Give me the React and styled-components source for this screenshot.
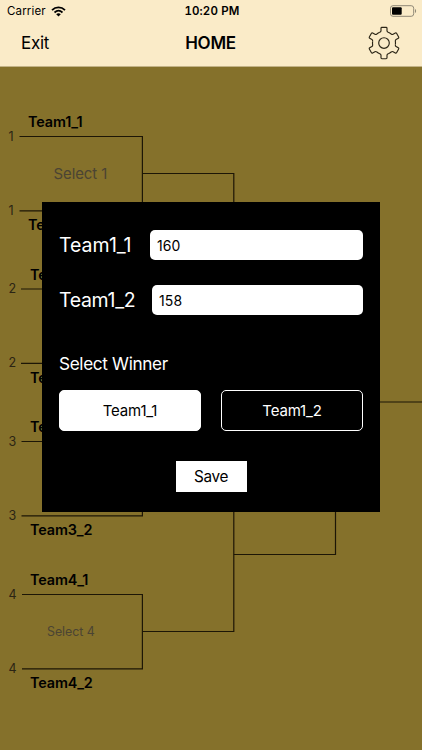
import React, { useState } from "react"
import styled, { createGlobalStyle } from "styled-components"

const GlobalStyle = createGlobalStyle`
  * {
    box-sizing: border-box;
  }

  body {
    margin: 0;
    font-family: "Inter", "Liberation Sans", sans-serif;
    overflow: hidden;
  }
`

const Screen = styled.div`
  width: 422px;
  height: 750px;
  display: flex;
  flex-direction: column;
  background: #85712b;
  color: #000;
  overflow: hidden;
`

const Header = styled.header`
  height: 67px;
  flex: none;
  background: #faebc8;
  border-bottom: 1px solid #c3b386;
`

const StatusBar = styled.div`
  height: 22px;
  display: grid;
  grid-template-columns: 1fr auto 1fr;
  align-items: center;
  padding: 0 5px 0 7px;
  font-size: 11.5px;
`

const Carrier = styled.div`
  display: flex;
  align-items: center;
  gap: 5px;
  letter-spacing: 0.16px;
`

const Clock = styled.div`
  font-weight: 600;
  font-variant-numeric: tabular-nums;
  letter-spacing: 0.15px;
`

const BatteryHolder = styled.div`
  display: flex;
  justify-content: flex-end;
`

const NavBar = styled.nav`
  height: 42px;
  display: grid;
  grid-template-columns: 1fr auto 1fr;
  align-items: center;
  padding: 0 22px 0 21px;
`

const ExitButton = styled.button`
  border: none;
  background: none;
  padding: 0;
  font: inherit;
  font-size: 17px;
  letter-spacing: -0.3px;
  color: #000;
  justify-self: start;
`

const Title = styled.h1`
  margin: 0;
  font-size: 17px;
  font-weight: 600;
  letter-spacing: -0.3px;
`

const SettingsButton = styled.button`
  display: flex;
  border: none;
  background: none;
  padding: 0;
  justify-self: end;
`

const Main = styled.main`
  position: relative;
  flex: 1;
`

const BracketLines = styled.svg`
  display: block;
`

const BracketLabel = styled.span`
  position: absolute;
  left: ${(props) => props.$x}px;
  top: ${(props) => props.$y}px;
  transform: translateY(-50%);
  line-height: 1;
  white-space: nowrap;
`

const TeamName = styled(BracketLabel)`
  font-size: 14.4px;
  font-weight: 600;
  letter-spacing: -0.12px;
`

const Seed = styled(BracketLabel)`
  font-size: 12.5px;
  color: #2b2414;
`

const MatchHint = styled(BracketLabel)`
  font-size: ${(props) => props.$size}px;
  letter-spacing: -0.05px;
  color: #4b4433;
`

const Modal = styled.form`
  position: absolute;
  left: 42px;
  top: 135px;
  width: 338px;
  height: 310px;
  padding: 28px 17px 0;
  background: #000;
  color: #fff;
`

const ScoreRow = styled.div`
  display: flex;
  align-items: center;
  height: 30px;
  margin-bottom: 25px;
`

const ScoreLabel = styled.label`
  width: ${(props) => props.$width}px;
  font-size: 19.5px;
  letter-spacing: ${(props) => props.$spacing}px;
`

const ScoreInput = styled.input`
  flex: 1;
  min-width: 0;
  height: 30px;
  border: none;
  border-radius: 5px;
  padding: 0 7px;
  background: #fff;
  color: #000;
  font: inherit;
  font-size: 14px;
  letter-spacing: 0.1px;
  outline: none;
`

const WinnerHeading = styled.h2`
  margin: 38px 0 15px;
  font-size: 17.2px;
  font-weight: 400;
  line-height: 22px;
  letter-spacing: -0.35px;
`

const WinnerRow = styled.div`
  display: grid;
  grid-template-columns: 1fr 1fr;
  gap: 20px;
`

const WinnerButton = styled.button`
  height: 41px;
  border: 1px solid #fff;
  border-radius: 5px;
  padding: 0;
  background: ${(props) => (props.$selected ? "#fff" : "#000")};
  color: ${(props) => (props.$selected ? "#000" : "#fff")};
  font: inherit;
  font-size: 15px;
  letter-spacing: -0.17px;
`

const SaveButton = styled.button`
  display: block;
  width: 71px;
  height: 31px;
  margin: 30px auto 0;
  border: none;
  padding: 0;
  background: #fff;
  color: #000;
  font: inherit;
  font-size: 15.3px;
  letter-spacing: -0.3px;
`

// y is the top line of each first round match, x the left edge of its lines
const matches = [
  { id: 1, x: 19.5, y: 69.5, nameX: 28 },
  { id: 2, x: 21, y: 222, nameX: 30 },
  { id: 3, x: 21.5, y: 374.5, nameX: 30 },
  { id: 4, x: 22, y: 527.5, nameX: 30 },
]

const hints = [
  { id: 1, x: 53.5, y: 106.5, size: 14.9 },
  { id: 4, x: 47, y: 565, size: 12.4 },
]

const teams = [
  { name: "Team1_1", score: "160", width: 91, spacing: 0 },
  { name: "Team1_2", score: "158", width: 93, spacing: -0.33 },
]

const gearTeeth = [0, 60, 120, 180, 240, 300]

function WifiIcon() {
  return (
    <svg width="15" height="11" viewBox="0 0 15 11" fill="none" stroke="#000">
      <path d="M1 4.1C4.7.5 10.3.5 14 4.1" strokeWidth="1.8" />
      <path d="M3.5 6.5c2.4-2.2 5.6-2.2 8 0" strokeWidth="1.7" />
      <path d="M7.5 10.4 5.2 8.2c1.4-1.2 3.2-1.2 4.6 0z" fill="#000" stroke="none" />
    </svg>
  )
}

function BatteryIcon() {
  return (
    <svg width="27" height="12" viewBox="0 0 27 12">
      <rect x="0.5" y="0.7" width="23.2" height="10.6" rx="2.5" fill="none" stroke="#8f8876" />
      <rect x="2" y="2.3" width="9.7" height="7.4" rx="1" fill="#000" />
      <path d="M25 4v4c1.5-.5 1.5-3.5 0-4z" fill="#8f8876" />
    </svg>
  )
}

function GearIcon() {
  return (
    <svg width="32" height="34" viewBox="-16 -17 32 34" fill="none" stroke="#2b2516" strokeWidth="1.15">
      <circle r="5.3" />
      {gearTeeth.map((angle) => (
        <path
          key={angle}
          transform={`rotate(${angle})`}
          d="M-4.2-10.7Q-3-11.2-3-12.2V-14.8Q-3-15.7-2.1-15.7H2.1Q3-15.7 3-14.8V-12.2Q3-11.2 4.2-10.7Q5.8-10.1 7.17-8.99"
        />
      ))}
    </svg>
  )
}

function Bracket() {
  return (
    <>
      <BracketLines width="422" height="683" fill="none" stroke="#1d1606" strokeWidth="1.2">
        {matches.map((match) => (
          <path key={match.id} d={`M${match.x} ${match.y}H142.4v74.3H${match.x}`} />
        ))}
        <path d="M142.4 106.5H233.8V259.5H142.4" />
        <path d="M142.4 411.5H233.8V564.5H142.4" />
        <path d="M233.8 183H335.5V487.5H233.8" />
        <path d="M335.5 335H422" />
      </BracketLines>
      {matches.map((match) => (
        <React.Fragment key={match.id}>
          <TeamName $x={match.nameX} $y={match.y - 14.5}>{`Team${match.id}_1`}</TeamName>
          <Seed $x={8.5} $y={match.y}>{match.id}</Seed>
          <Seed $x={8.5} $y={match.y + 74.3}>{match.id}</Seed>
          <TeamName $x={match.nameX} $y={match.y + 88.5}>{`Team${match.id}_2`}</TeamName>
        </React.Fragment>
      ))}
      {hints.map((hint) => (
        <MatchHint key={hint.id} $x={hint.x} $y={hint.y} $size={hint.size}>
          Select {hint.id}
        </MatchHint>
      ))}
    </>
  )
}

function ScoreModal() {
  const [scores, setScores] = useState(teams.map((team) => team.score))
  const [winner, setWinner] = useState("Team1_1")

  const updateScore = (index, value) => {
    setScores(scores.map((score, i) => (i === index ? value : score)))
  }

  return (
    <Modal onSubmit={(e) => e.preventDefault()}>
      {teams.map((team, index) => (
        <ScoreRow key={team.name}>
          <ScoreLabel htmlFor={team.name} $width={team.width} $spacing={team.spacing}>
            {team.name}
          </ScoreLabel>
          <ScoreInput
            id={team.name}
            type="text"
            value={scores[index]}
            onChange={(e) => updateScore(index, e.target.value)}
          />
        </ScoreRow>
      ))}
      <WinnerHeading>Select Winner</WinnerHeading>
      <WinnerRow>
        {teams.map((team) => (
          <WinnerButton
            key={team.name}
            type="button"
            $selected={winner === team.name}
            onClick={() => setWinner(team.name)}
          >
            {team.name}
          </WinnerButton>
        ))}
      </WinnerRow>
      <SaveButton type="submit">Save</SaveButton>
    </Modal>
  )
}

export default function App() {
  return (
    <Screen>
      <GlobalStyle />
      <Header>
        <StatusBar>
          <Carrier>
            Carrier
            <WifiIcon />
          </Carrier>
          <Clock>10:20 PM</Clock>
          <BatteryHolder>
            <BatteryIcon />
          </BatteryHolder>
        </StatusBar>
        <NavBar>
          <ExitButton>Exit</ExitButton>
          <Title>HOME</Title>
          <SettingsButton>
            <GearIcon />
          </SettingsButton>
        </NavBar>
      </Header>
      <Main>
        <Bracket />
        <ScoreModal />
      </Main>
    </Screen>
  )
}
